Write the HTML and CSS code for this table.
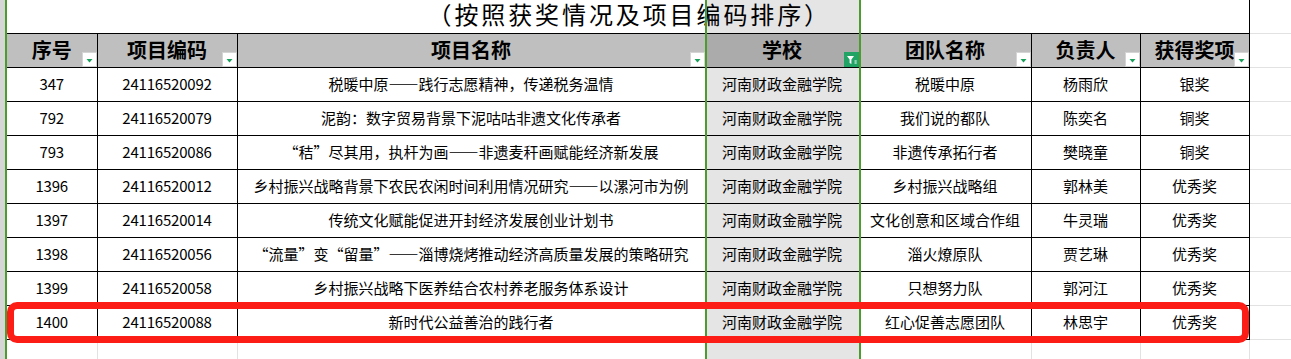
FILE: index.html
```html
<!DOCTYPE html>
<html lang="zh-CN">
<head>
<meta charset="utf-8">
<title>获奖名单</title>
<link rel="stylesheet" href="styles.css">
</head>
<body>
<div class="sheet">
  <div class="pane">
    <table class="grid">
      <colgroup>
        <col class="c-no"><col class="c-code"><col class="c-name"><col class="c-school"><col class="c-team"><col class="c-lead"><col class="c-award"><col class="c-pad">
      </colgroup>
      <tr class="title-row">
        <td colspan="7" class="title"><span>（按照获奖情况及项目编码排序）</span></td>
        <td class="pad"></td>
      </tr>
      <tr class="head">
        <th>序号<span class="filter"><svg viewBox="0 0 13 13"><polygon points="3.5,6 9.5,6 6.5,9.5" fill="#1aa05c"/></svg></span></th>
        <th>项目编码<span class="filter"><svg viewBox="0 0 13 13"><polygon points="3.5,6 9.5,6 6.5,9.5" fill="#1aa05c"/></svg></span></th>
        <th>项目名称<span class="filter"><svg viewBox="0 0 13 13"><polygon points="3.5,6 9.5,6 6.5,9.5" fill="#1aa05c"/></svg></span></th>
        <th>学校<span class="filter active"><svg viewBox="0 0 15 15"><path d="M3 4H10L7.4 7.6V12L5.6 11V7.6Z" fill="#fff"/><rect x="10.5" y="8.5" width="2.2" height="1" fill="#fff"/><rect x="10.5" y="10.5" width="2.2" height="1" fill="#fff"/></svg></span></th>
        <th>团队名称<span class="filter"><svg viewBox="0 0 13 13"><polygon points="3.5,6 9.5,6 6.5,9.5" fill="#1aa05c"/></svg></span></th>
        <th>负责人<span class="filter"><svg viewBox="0 0 13 13"><polygon points="3.5,6 9.5,6 6.5,9.5" fill="#1aa05c"/></svg></span></th>
        <th>获得奖项<span class="filter"><svg viewBox="0 0 13 13"><polygon points="3.5,6 9.5,6 6.5,9.5" fill="#1aa05c"/></svg></span></th>
        <td class="pad"></td>
      </tr>
      <tr class="row"><td class="num">347</td><td class="num">24116520092</td><td>税暖中原——践行志愿精神，传递税务温情</td><td>河南财政金融学院</td><td>税暖中原</td><td>杨雨欣</td><td>银奖</td><td class="pad"></td></tr>
      <tr class="row"><td class="num">792</td><td class="num">24116520079</td><td>泥韵：数字贸易背景下泥咕咕非遗文化传承者</td><td>河南财政金融学院</td><td>我们说的都队</td><td>陈奕名</td><td>铜奖</td><td class="pad"></td></tr>
      <tr class="row"><td class="num">793</td><td class="num">24116520086</td><td>“秸”尽其用，执杆为画——非遗麦秆画赋能经济新发展</td><td>河南财政金融学院</td><td>非遗传承拓行者</td><td>樊晓童</td><td>铜奖</td><td class="pad"></td></tr>
      <tr class="row"><td class="num">1396</td><td class="num">24116520012</td><td>乡村振兴战略背景下农民农闲时间利用情况研究——以漯河市为例</td><td>河南财政金融学院</td><td>乡村振兴战略组</td><td>郭林美</td><td>优秀奖</td><td class="pad"></td></tr>
      <tr class="row"><td class="num">1397</td><td class="num">24116520014</td><td>传统文化赋能促进开封经济发展创业计划书</td><td>河南财政金融学院</td><td>文化创意和区域合作组</td><td>牛灵瑞</td><td>优秀奖</td><td class="pad"></td></tr>
      <tr class="row"><td class="num">1398</td><td class="num">24116520056</td><td>“流量”变“留量”——淄博烧烤推动经济高质量发展的策略研究</td><td>河南财政金融学院</td><td>淄火燎原队</td><td>贾艺琳</td><td>优秀奖</td><td class="pad"></td></tr>
      <tr class="row"><td class="num">1399</td><td class="num">24116520058</td><td>乡村振兴战略下医养结合农村养老服务体系设计</td><td>河南财政金融学院</td><td>只想努力队</td><td>郭河江</td><td>优秀奖</td><td class="pad"></td></tr>
      <tr class="row"><td class="num">1400</td><td class="num">24116520088</td><td>新时代公益善治的践行者</td><td>河南财政金融学院</td><td>红心促善志愿团队</td><td>林思宇</td><td>优秀奖</td><td class="pad"></td></tr>
      <tr class="blank"><td></td><td></td><td></td><td></td><td></td><td></td><td></td><td class="pad"></td></tr>
    </table>
  </div>
  <div class="col-select"></div>
  <div class="mark"></div>
</div>
</body>
</html>
```

FILE: styles.css
```css
html, body {
  margin: 0;
  padding: 0;
  background: #fff;
}
body {
  width: 1291px;
  height: 359px;
  overflow: hidden;
  font-family: "Noto Sans CJK SC", "Noto Sans", sans-serif;
  color: #000;
}
.sheet {
  position: relative;
  height: 359px;
  border-left: 5px solid #d6d6d6;
  overflow: hidden;
}
.pane {
  border-left: 2px solid #4b9b2e;
  height: 359px;
}
.grid {
  border-collapse: collapse;
  table-layout: fixed;
  width: 1284px;
}
.c-no { width: 90px; }
.c-code { width: 140px; }
.c-name { width: 468px; }
.c-school { width: 154px; }
.c-team { width: 172px; }
.c-lead { width: 109px; }
.c-award { width: 109px; }
.c-pad { width: 42px; }

.grid td, .grid th {
  padding: 0;
  text-align: center;
  vertical-align: middle;
  white-space: nowrap;
}
.title-row { height: 33px; }
.title {
  border-right: 1px solid #000;
  vertical-align: top !important;
  font-size: 24px;
  line-height: 28px;
  letter-spacing: 2.9px;
  font-weight: 400;
}
.title span {
  display: inline-block;
  padding-left: 3px;
}
.head { height: 34px; }
.head th {
  position: relative;
  background: #bfbfbf;
  border: 1px solid #000;
  font-size: 20px;
  font-weight: 700;
  line-height: 24px;
}
.head th:first-child { border-left: none; }
.filter {
  position: absolute;
  right: 0;
  bottom: 0;
  width: 15px;
  height: 15px;
  box-sizing: border-box;
  background: #fff;
  border: 1px solid #d4d4d4;
  z-index: 3;
}
.filter svg {
  display: block;
  width: 13px;
  height: 13px;
}
.filter.active {
  background: #21a366;
  border: none;
}
.filter.active svg {
  width: 15px;
  height: 15px;
}
.row { height: 34px; }
.row td {
  border: 1px solid #000;
  font-size: 15px;
  line-height: 20px;
}
.row td:first-child { border-left: none; }
.row td.num {
  letter-spacing: -0.2px;
}
.grid .pad {
  border-top: none;
  border-right: none;
  border-bottom: 1px solid #e2e2e2;
  background: #fff;
}
.blank { height: 30px; }
.blank td {
  border-right: 1px solid #e2e2e2;
}
.col-select {
  position: absolute;
  left: 700px;
  top: 0;
  width: 156px;
  height: 359px;
  box-sizing: border-box;
  border-left: 2px solid #4b9b2e;
  border-right: 2px solid #4b9b2e;
  background: rgba(0, 0, 0, 0.1);
  pointer-events: none;
  z-index: 2;
}
.mark {
  position: absolute;
  left: 2px;
  top: 302px;
  width: 1242px;
  height: 41px;
  box-sizing: border-box;
  border: 7px solid #fc1e16;
  border-radius: 10px;
  pointer-events: none;
  z-index: 4;
}
```
